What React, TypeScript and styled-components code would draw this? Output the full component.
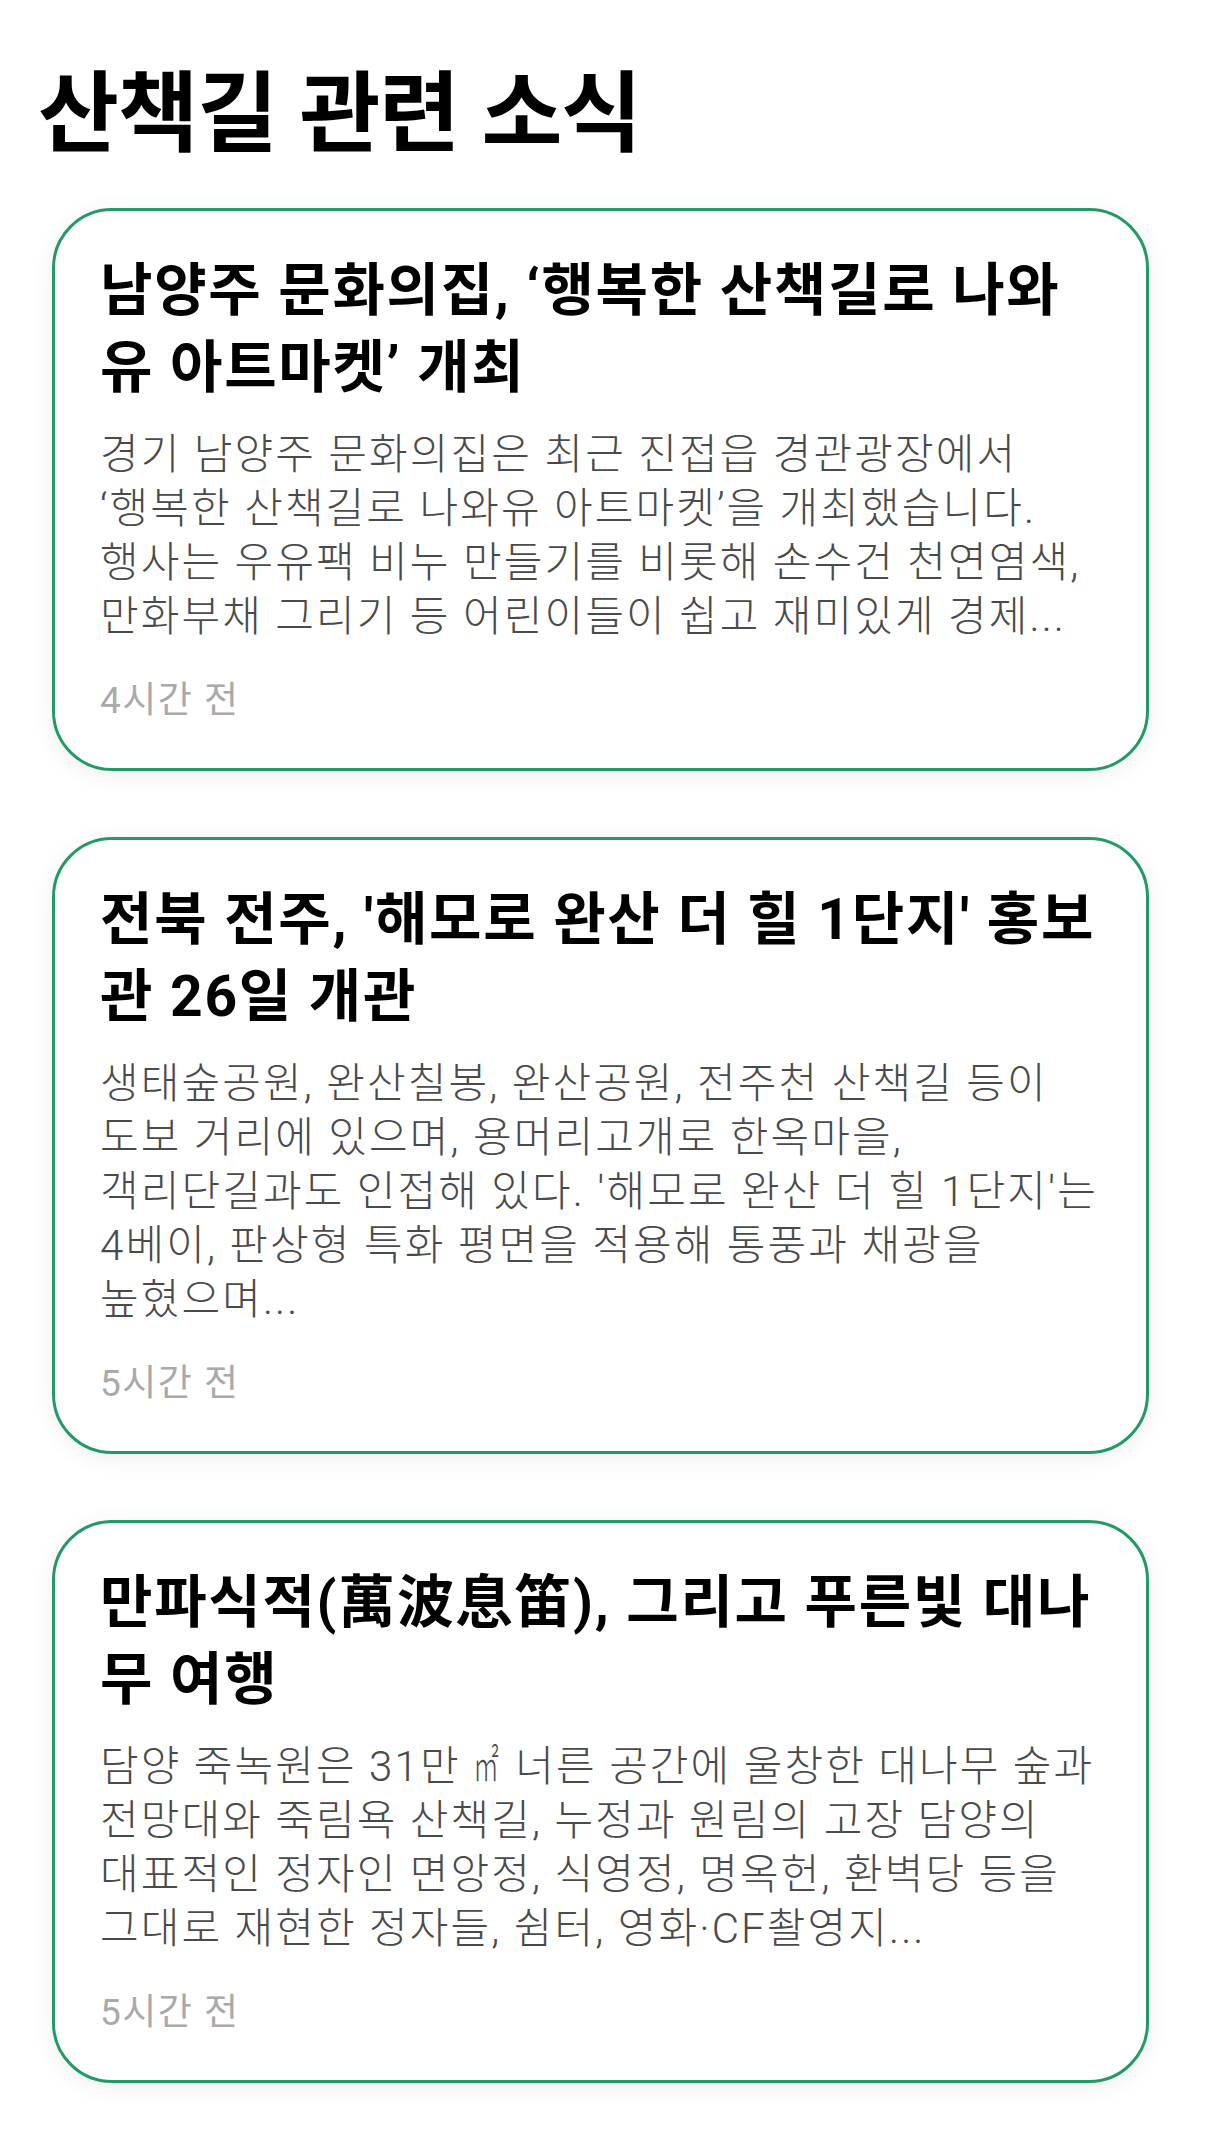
import { Fragment } from "react";
import styled, { createGlobalStyle } from "styled-components";

const GlobalStyle = createGlobalStyle`
    html, body {
        margin: 0;
        padding: 0;
        background: #ffffff;
    }

    body {
        font-family: Roboto, "Noto Sans CJK KR", sans-serif;
        color: #000;
    }
`;

type NewsItem = {
    title: string;
    summary: string;
    time: string;
};

const news: NewsItem[] = [
    {
        title: "남양주 문화의집, ‘행복한 산책길로 나와유 아트마켓’ 개최",
        summary:
            "경기 남양주 문화의집은 최근 진접읍 경관광장에서 ‘행복한 산책길로 나와유 아트마켓’을 개최했습니다. 행사는 우유팩 비누 만들기를 비롯해 손수건 천연염색, 만화부채 그리기 등 어린이들이 쉽고 재미있게 경제...",
        time: "4시간 전",
    },
    {
        title: "전북 전주, '해모로 완산 더 힐 1단지' 홍보관 26일 개관",
        summary:
            "생태숲공원, 완산칠봉, 완산공원, 전주천 산책길 등이 도보 거리에 있으며, 용머리고개로 한옥마을, 객리단길과도 인접해 있다. '해모로 완산 더 힐 1단지'는 4베이, 판상형 특화 평면을 적용해 통풍과 채광을 높혔으며...",
        time: "5시간 전",
    },
    {
        title: "만파식적(萬波息笛), 그리고 푸른빛 대나무 여행",
        summary:
            "담양 죽녹원은 31만 ㎡ 너른 공간에 울창한 대나무 숲과 전망대와 죽림욕 산책길, 누정과 원림의 고장 담양의 대표적인 정자인 면앙정, 식영정, 명옥헌, 환벽당 등을 그대로 재현한 정자들, 쉼터, 영화·CF촬영지...",
        time: "5시간 전",
    },
];

// ㎡ comes out full-width in the CJK font, so it gets its own narrow span
const renderSummary = (text: string) =>
    text.split("㎡").map((part, i) => (
        <Fragment key={i}>
            {i > 0 && (
                <Unit>
                    <UnitGlyph>㎡</UnitGlyph>
                </Unit>
            )}
            {part}
        </Fragment>
    ));

export default function App() {
    return (
        <>
            <GlobalStyle />
            <Page lang="ko">
                <Heading>산책길 관련 소식</Heading>
                <CardList>
                    {news.map((item) => (
                        <Card key={item.title}>
                            <CardTitle>{item.title}</CardTitle>
                            <Summary>{renderSummary(item.summary)}</Summary>
                            <Time>{item.time}</Time>
                        </Card>
                    ))}
                </CardList>
            </Page>
        </>
    );
}

const Page = styled.main`
    width: 1206px;
    box-sizing: border-box;
    padding: 44px 57px 54px 52px;
`;

const Heading = styled.h1`
    margin: 0 0 40px -14px;
    font-family: "Noto Sans CJK KR", sans-serif;
    font-size: 88px;
    line-height: 124px;
    font-weight: 700;
    letter-spacing: -1.5px;
    color: #000;
`;

const CardList = styled.div`
    display: flex;
    flex-direction: column;
    gap: 66px;
`;

const Card = styled.article`
    display: flex;
    flex-direction: column;
    border: 3px solid #229a66;
    border-radius: 60px;
    background: #fff;
    box-shadow: 0 4px 22px rgba(0, 0, 0, 0.07);
    padding: 41px 45px 44px 45px;
`;

const CardTitle = styled.h2`
    margin: 0;
    font-size: 57px;
    line-height: 77px;
    font-weight: 700;
    letter-spacing: 1.7px;
    color: #000;
    word-break: normal;
`;

const Summary = styled.p`
    margin: 22px 0 0;
    font-size: 42px;
    line-height: 54px;
    font-weight: 300;
    letter-spacing: 2.1px;
    color: #4a4a4a;
    word-break: keep-all;
`;

const Unit = styled.span`
    display: inline-block;
    width: 30px;
    letter-spacing: 0;
    white-space: nowrap;
`;

const UnitGlyph = styled.span`
    display: inline-block;
    transform: scaleX(0.62);
    transform-origin: left center;
`;

const Time = styled.span`
    margin-top: 34px;
    font-size: 37px;
    line-height: 46px;
    letter-spacing: 1.5px;
    color: #a9a9a9;
`;
